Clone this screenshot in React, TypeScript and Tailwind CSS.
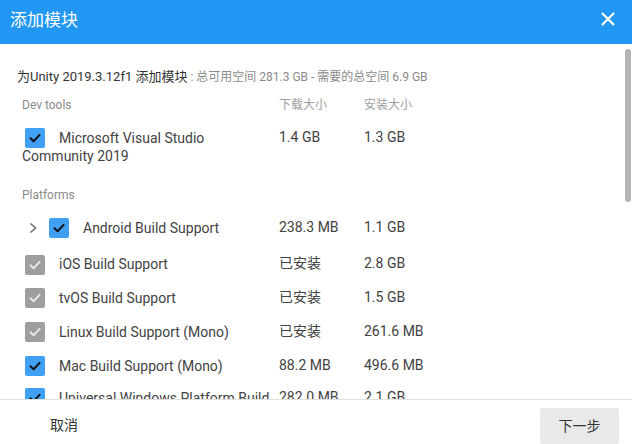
import React from 'react';

type Mod = {
  name: string;
  download: string;
  install: string;
  checked: boolean;
  installed?: boolean;
  expandable?: boolean;
};

const devTools: Mod[] = [
  { name: 'Microsoft Visual Studio Community 2019', download: '1.4 GB', install: '1.3 GB', checked: true },
];

const platforms: Mod[] = [
  { name: 'Android Build Support', download: '238.3 MB', install: '1.1 GB', checked: true, expandable: true },
  { name: 'iOS Build Support', download: '已安装', install: '2.8 GB', checked: true, installed: true },
  { name: 'tvOS Build Support', download: '已安装', install: '1.5 GB', checked: true, installed: true },
  { name: 'Linux Build Support (Mono)', download: '已安装', install: '261.6 MB', checked: true, installed: true },
  { name: 'Mac Build Support (Mono)', download: '88.2 MB', install: '496.6 MB', checked: true },
  { name: 'Universal Windows Platform Build Support', download: '282.0 MB', install: '2.1 GB', checked: true },
];

// spacing above each platform row
const platformGaps = ['mt-[15px]', 'mt-[19px]', 'mt-[16px]', 'mt-[16px]', 'mt-[16px]', 'mt-[14px]'];

function Checkbox({ disabled }: { disabled?: boolean }) {
  return (
    <span
      className={
        'inline-flex items-center justify-center w-[20px] h-[20px] -my-[3px] rounded-[2px] align-middle ' +
        (disabled ? 'bg-[#9e9e9e]' : 'bg-[#3fa0f5]')
      }
    >
      <svg width="14" height="14" viewBox="0 0 14 14" fill="none">
        <path
          d="M2.5 7.2 L5.6 10.2 L11.6 3.9"
          stroke={disabled ? '#e6e6e6' : '#111'}
          strokeWidth="2"
          strokeLinecap="round"
          strokeLinejoin="round"
        />
      </svg>
    </span>
  );
}

function Row({ mod, className }: { mod: Mod; className?: string }) {
  return (
    <div className={'grid grid-cols-[257px_85px_1fr] text-[14px] leading-[17px] text-[#424242] ' + (className ?? '')}>
      <div className="pr-[6px]">
        {mod.expandable ? (
          <span className="inline-flex items-center w-[24px] h-[12px] -my-[2px] ml-[3px] align-middle">
            <svg width="10" height="12" viewBox="0 0 10 12" fill="none" className="ml-[3px]">
              <path d="M2.5 1.5 L7.5 6 L2.5 10.5" stroke="#6e6e6e" strokeWidth="1.6" />
            </svg>
          </span>
        ) : null}
        <span className={mod.expandable ? 'mr-[14px]' : 'ml-[3px] mr-[14px]'}>
          <Checkbox disabled={mod.installed} />
        </span>
        <span className="align-middle">{mod.name}</span>
      </div>
      <div>{mod.download}</div>
      <div>{mod.install}</div>
    </div>
  );
}

export default function App() {
  return (
    <div
      className="w-[632px] h-[444px] flex flex-col bg-white overflow-hidden"
      style={{ fontFamily: 'Roboto, "Noto Sans CJK SC", sans-serif' }}
    >
      {/* header */}
      <div className="h-[44px] shrink-0 bg-[#2196f3] flex items-center justify-between pl-[10px] pr-[16px]">
        <span className="text-white text-[17px] -mt-[3px]">添加模块</span>
        <svg width="16" height="16" viewBox="0 0 16 16" className="-mt-[6px]">
          <path d="M2 2 L14 14 M14 2 L2 14" stroke="#fff" strokeWidth="2.2" />
        </svg>
      </div>

      {/* body */}
      <div className="flex-1 relative overflow-hidden">
        <div className="pl-[22px] pt-[24px]">
          <p className="text-[13px] leading-[18px] -ml-[5px] text-[#333]">
            为Unity 2019.3.12f1 添加模块
            <span className="text-[12px] text-[#8a8a8a]"> : 总可用空间 281.3 GB - 需要的总空间 6.9 GB</span>
          </p>

          <div className="grid grid-cols-[257px_85px_1fr] mt-[10px] text-[12px] leading-[18px]">
            <span className="text-[#8a8a8a]">Dev tools</span>
            <span className="text-[#9e9e9e]">下载大小</span>
            <span className="text-[#9e9e9e]">安装大小</span>
          </div>

          {devTools.map((m) => (
            <Row key={m.name} mod={m} className="mt-[15px]" />
          ))}

          <div className="mt-[21px] text-[12px] leading-[18px] text-[#8a8a8a]">Platforms</div>

          {platforms.map((m, i) => (
            <Row key={m.name} mod={m} className={platformGaps[i]} />
          ))}
        </div>

        {/* scrollbar thumb */}
        <div className="absolute right-[1px] top-[5px] w-[6px] h-[153px] rounded-full bg-[#b4b4b4]" />
      </div>

      {/* footer */}
      <div className="h-[45px] shrink-0 border-t border-[#e0e0e0] flex items-start justify-between">
        <button className="text-[14px] text-[#333] pl-[50px] pt-[16px] leading-[18px]">取消</button>
        <button className="mt-[8px] mr-[13px] w-[79px] h-[36px] bg-[#e9e9e9] rounded-[2px] text-[14px] text-[#333]">
          下一步
        </button>
      </div>
    </div>
  );
}
